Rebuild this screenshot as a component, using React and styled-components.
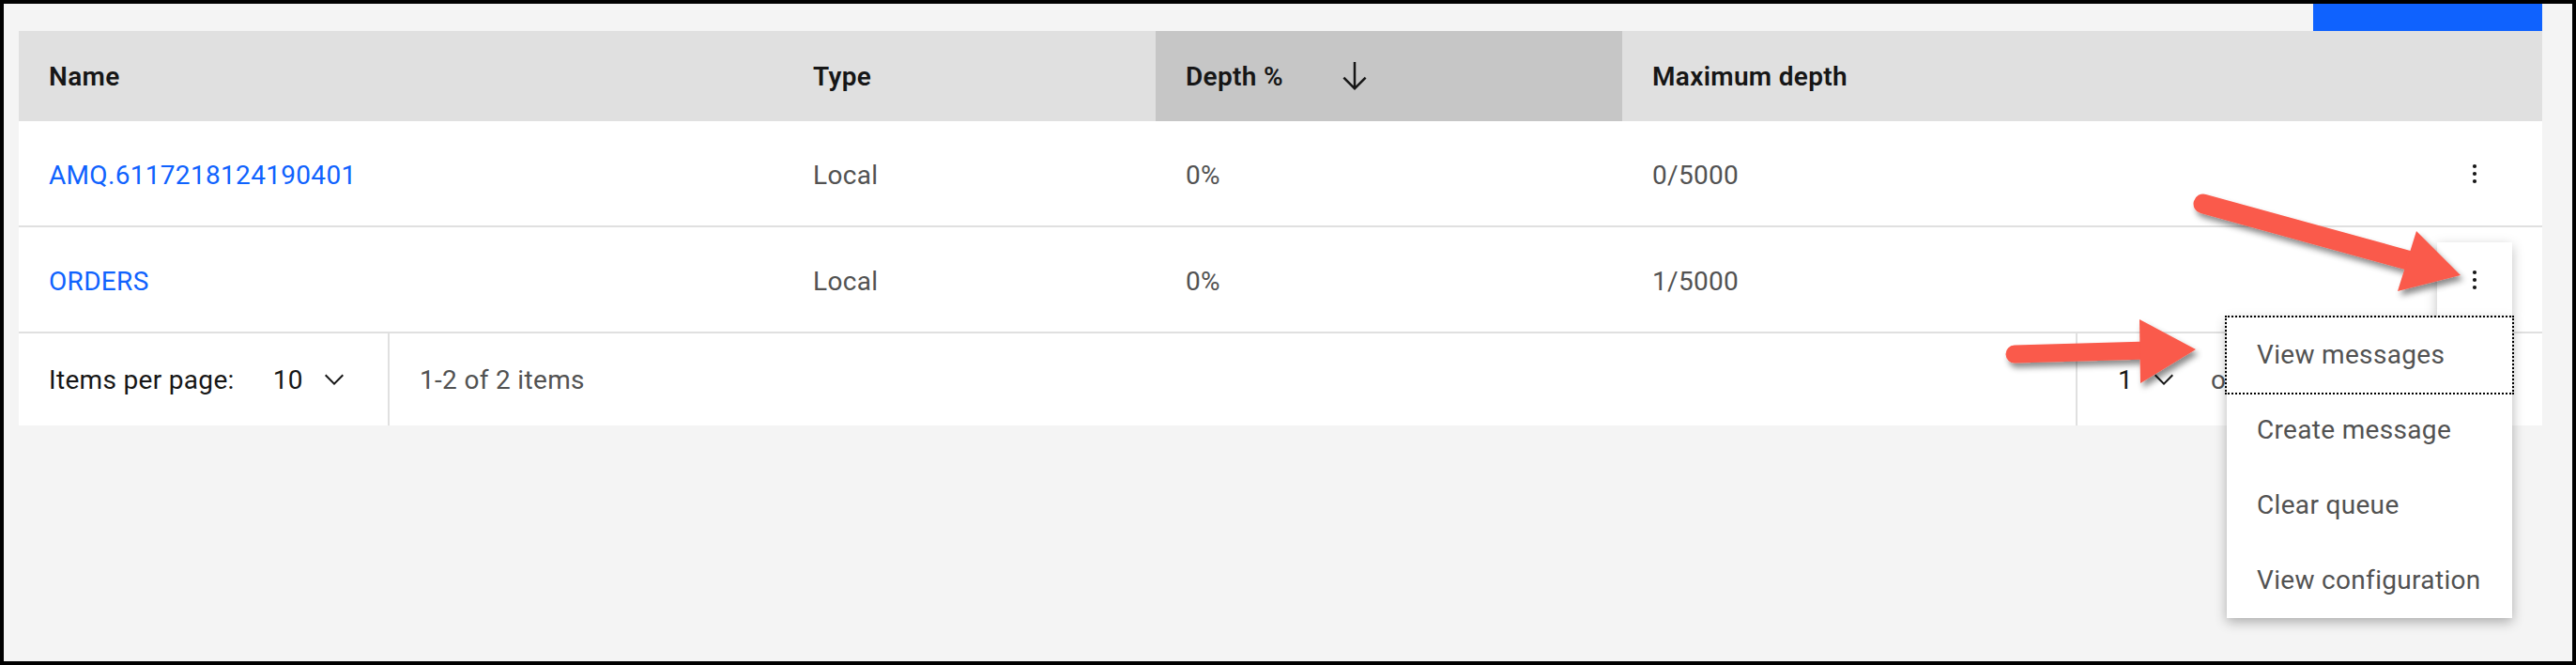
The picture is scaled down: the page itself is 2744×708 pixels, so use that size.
import React from "react";
import styled, { createGlobalStyle } from "styled-components";

const GlobalStyle = createGlobalStyle`
  html, body {
    margin: 0;
    padding: 0;
    background: #000;
  }
  * {
    box-sizing: border-box;
  }
`;

const Shell = styled.div`
  position: relative;
  width: 2744px;
  height: 708px;
  font-family: Roboto, "Liberation Sans", sans-serif;
  font-size: 28px;
  letter-spacing: 0.32px;
`;

const Frame = styled.div`
  height: 708px;
  border: 4px solid #000;
  background: #f4f4f4;
  padding: 0 32px 0 16px;
  display: flex;
  flex-direction: column;
`;

const Toolbar = styled.div`
  height: 29px;
  display: flex;
  justify-content: flex-end;
`;

const PrimaryButton = styled.button`
  width: 244px;
  height: 100%;
  border: none;
  padding: 0;
  background: #0f62fe;
`;

const Table = styled.div`
  background: #fff;
  display: flex;
  flex-direction: column;
`;

const columns = "814px 397px 497px 1fr 112px";

const HeaderRow = styled.div`
  display: grid;
  grid-template-columns: ${columns};
  height: 96px;
  background: #e0e0e0;
`;

const HeaderCell = styled.div`
  grid-column: span ${(p) => p.$span || 1};
  display: flex;
  align-items: center;
  padding-left: 32px;
  font-weight: 600;
  color: #161616;
  background: ${(p) => (p.$sorted ? "#c6c6c6" : "transparent")};
`;

const SortLabel = styled.span`
  min-width: 160px;
`;

const BodyRow = styled.div`
  display: grid;
  grid-template-columns: ${columns};
  height: 113px;
  padding-top: 3px;
  border-bottom: 2px solid #e0e0e0;
`;

const Cell = styled.div`
  display: flex;
  align-items: center;
  padding-left: 32px;
  color: ${(p) => (p.$link ? "#0f62fe" : "#525252")};
`;

const OverflowCell = styled.div`
  display: flex;
  align-items: center;
  margin-top: -3px;
`;

const OverflowWrap = styled.div`
  position: relative;
`;

const OverflowButton = styled.button`
  width: 80px;
  height: 80px;
  border: none;
  padding: 0;
  display: flex;
  align-items: center;
  justify-content: center;
  color: #161616;
  background: ${(p) => (p.$open ? "#fff" : "transparent")};
  box-shadow: ${(p) => (p.$open ? "0 4px 12px rgba(0, 0, 0, 0.25)" : "none")};
`;

const Menu = styled.ul`
  position: absolute;
  top: 100%;
  right: 0;
  z-index: 5;
  width: 304px;
  margin: 0;
  padding: 0;
  list-style: none;
  background: #fff;
  box-shadow: 0 4px 12px rgba(0, 0, 0, 0.3);
`;

const MenuItem = styled.li`
  height: 80px;
  display: flex;
  align-items: center;
  padding-left: 32px;
  color: #525252;
  outline: ${(p) => (p.$focused ? "2px dotted #000" : "none")};
`;

const Footer = styled.div`
  height: 98px;
  display: flex;
  justify-content: space-between;
  background: #fff;
`;

const FooterGroup = styled.div`
  display: flex;
  align-items: stretch;
`;

const FooterSection = styled.div`
  display: flex;
  align-items: center;
  flex-shrink: 0;
  overflow: hidden;
  padding-left: ${(p) => p.$pl || 32}px;
  width: ${(p) => (p.$w ? `${p.$w}px` : "auto")};
  border-left: ${(p) => (p.$divider ? "2px solid #e0e0e0" : "none")};
  color: ${(p) => (p.$muted ? "#525252" : "#161616")};
`;

const SelectValue = styled.span`
  color: #161616;
  margin-left: ${(p) => p.$ml || 0}px;
`;

const Chevron = styled.span`
  display: flex;
  margin-left: ${(p) => p.$ml || 0}px;
  margin-right: ${(p) => p.$mr || 0}px;
`;

const PagerButton = styled.div`
  width: 96px;
  display: flex;
  align-items: center;
  justify-content: center;
  border-left: 2px solid #e0e0e0;
  color: #8d8d8d;
`;

const Annotations = styled.svg`
  position: absolute;
  left: 0;
  top: 0;
  pointer-events: none;
  z-index: 20;
`;

const ArrowDownIcon = () => (
  <svg width="40" height="40" viewBox="0 0 32 32" fill="#161616">
    <path d="M24.59 16.59L17 24.17 17 4 15 4 15 24.17 7.41 16.59 6 18 16 28 26 18 24.59 16.59z" />
  </svg>
);

const ChevronDownIcon = () => (
  <svg width="32" height="32" viewBox="0 0 32 32" fill="#161616">
    <path d="M16 22L6 12 7.4 10.6 16 19.2 24.6 10.6 26 12z" />
  </svg>
);

const CaretIcon = ({ dir }) => (
  <svg width="32" height="32" viewBox="0 0 32 32" fill="currentColor">
    {dir === "left" ? <path d="M20 24l-10-8 10-8z" /> : <path d="M12 8l10 8-10 8z" />}
  </svg>
);

const OverflowIcon = () => (
  <svg width="32" height="32" viewBox="0 0 32 32" fill="#161616">
    <circle cx="16" cy="8" r="2.1" />
    <circle cx="16" cy="16" r="2.1" />
    <circle cx="16" cy="24" r="2.1" />
  </svg>
);

const rows = [
  { name: "AMQ.6117218124190401", type: "Local", depth: "0%", max: "0/5000" },
  { name: "ORDERS", type: "Local", depth: "0%", max: "1/5000", open: true },
];

const menuItems = ["View messages", "Create message", "Clear queue", "View configuration"];

const RED = "#fa5a4b";

export default function App() {
  return (
    <>
      <GlobalStyle />
      <Shell>
        <Frame>
          <Toolbar>
            <PrimaryButton />
          </Toolbar>
          <Table>
            <HeaderRow>
              <HeaderCell>Name</HeaderCell>
              <HeaderCell>Type</HeaderCell>
              <HeaderCell $sorted>
                <SortLabel>Depth %</SortLabel>
                <ArrowDownIcon />
              </HeaderCell>
              <HeaderCell $span={2}>Maximum depth</HeaderCell>
            </HeaderRow>
            {rows.map((row) => (
              <BodyRow key={row.name}>
                <Cell $link>{row.name}</Cell>
                <Cell>{row.type}</Cell>
                <Cell>{row.depth}</Cell>
                <Cell>{row.max}</Cell>
                <OverflowCell>
                  <OverflowWrap>
                    <OverflowButton $open={row.open}>
                      <OverflowIcon />
                    </OverflowButton>
                    {row.open ? (
                      <Menu>
                        {menuItems.map((item, i) => (
                          <MenuItem key={item} $focused={i === 0}>
                            {item}
                          </MenuItem>
                        ))}
                      </Menu>
                    ) : null}
                  </OverflowWrap>
                </OverflowCell>
              </BodyRow>
            ))}
            <Footer>
              <FooterGroup>
                <FooterSection $w={393}>
                  Items per page:
                  <SelectValue $ml={41}>10</SelectValue>
                  <Chevron $ml={17}>
                    <ChevronDownIcon />
                  </Chevron>
                </FooterSection>
                <FooterSection $divider $muted>
                  1-2 of 2 items
                </FooterSection>
              </FooterGroup>
              <FooterGroup>
                <FooterSection $divider $pl={43} $w={305} $muted>
                  <SelectValue>1</SelectValue>
                  <Chevron $ml={17} $mr={34}>
                    <ChevronDownIcon />
                  </Chevron>
                  <span>of 1 pages</span>
                </FooterSection>
                <PagerButton>
                  <CaretIcon dir="left" />
                </PagerButton>
                <PagerButton>
                  <CaretIcon dir="right" />
                </PagerButton>
              </FooterGroup>
            </Footer>
          </Table>
        </Frame>
        <Annotations width="2744" height="708" viewBox="0 0 2744 708">
          <defs>
            <filter id="arrowShadow" x="-10%" y="-30%" width="120%" height="160%">
              <feDropShadow dx="3" dy="5" stdDeviation="3" floodColor="#000" floodOpacity="0.45" />
            </filter>
          </defs>
          <g filter="url(#arrowShadow)" fill={RED} stroke={RED}>
            <line x1="2347" y1="217" x2="2572" y2="279" strokeWidth="21" strokeLinecap="round" />
            <polygon points="2574,246 2621,293 2554,310" stroke="none" />
          </g>
          <g filter="url(#arrowShadow)" fill={RED} stroke={RED}>
            <line x1="2146" y1="377" x2="2288" y2="373" strokeWidth="19" strokeLinecap="round" />
            <polygon points="2279,340 2339,372 2280,408" stroke="none" />
          </g>
        </Annotations>
      </Shell>
    </>
  );
}
